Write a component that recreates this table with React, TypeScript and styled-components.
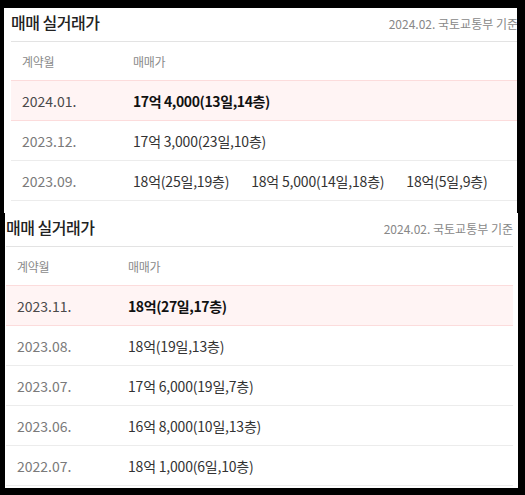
import React from "react";
import styled, { createGlobalStyle } from "styled-components";

const Global = createGlobalStyle`
  html, body { margin: 0; padding: 0; background: #000; }
  body { font-family: "Noto Sans CJK KR", "Noto Sans", sans-serif; }
  * { box-sizing: border-box; }
`;

const Page = styled.div`
  width: 525px;
  height: 495px;
  background: #000;
  padding-top: 8px;
  display: flex;
  flex-direction: column;
  overflow: hidden;
`;

const Shot = styled.div<{ $left: number; $padTop: number; $padLeft: number; $padBottom: number }>`
  margin-left: ${(p) => p.$left}px;
  width: 513px;
  background: #fff;
  overflow: hidden;
  padding: ${(p) => p.$padTop}px 0 ${(p) => p.$padBottom}px ${(p) => p.$padLeft}px;
`;

const Panel = styled.section`
  width: 507px;
`;

const TitleBar = styled.div`
  height: 34px;
  display: flex;
  align-items: center;
  justify-content: space-between;
  padding-bottom: 6px;
  border-bottom: 1px solid #e3e3e3;
`;

const Title = styled.h2`
  margin: 0;
  font-size: 16px;
  font-weight: 500;
  color: #222;
  letter-spacing: -0.5px;
`;

const Source = styled.span`
  font-size: 12px;
  color: #888;
  letter-spacing: 0;
  padding-top: 4px;
`;

const Row = styled.div<{ $kind: "head" | "hot" | "normal" }>`
  display: grid;
  grid-template-columns: 111px 1fr;
  align-items: center;
  height: ${(p) => (p.$kind === "head" ? 38 : p.$kind === "hot" ? 41 : 40)}px;
  padding-left: 11px;
  background: ${(p) => (p.$kind === "hot" ? "#fff4f4" : "#fff")};
  border-top: ${(p) => (p.$kind === "hot" ? "1px solid #fcdcdc" : "none")};
  border-bottom: ${(p) =>
    p.$kind === "head" ? "none" : p.$kind === "hot" ? "1px solid #fcdcdc" : "1px solid #ececec"};
`;

const HeadCell = styled.span`
  font-size: 12px;
  color: #8a8a8a;
  letter-spacing: -0.3px;
`;

const DateCell = styled.span<{ $hot: boolean }>`
  font-size: 14px;
  color: ${(p) => (p.$hot ? "#4a4a4a" : "#7a7a7a")};
  font-weight: 400;
`;

const Prices = styled.div`
  display: flex;
  gap: 22px;
`;

const Price = styled.span<{ $hot: boolean }>`
  font-size: 14px;
  color: ${(p) => (p.$hot ? "#111" : "#333")};
  font-weight: ${(p) => (p.$hot ? 700 : 400)};
  letter-spacing: ${(p) => (p.$hot ? "-0.4px" : "-0.2px")};
`;

type Deal = { month: string; prices: string[]; hot?: boolean };

const first: Deal[] = [
  { month: "2024.01.", prices: ["17억 4,000(13일,14층)"], hot: true },
  { month: "2023.12.", prices: ["17억 3,000(23일,10층)"] },
  { month: "2023.09.", prices: ["18억(25일,19층)", "18억 5,000(14일,18층)", "18억(5일,9층)"] },
];

const second: Deal[] = [
  { month: "2023.11.", prices: ["18억(27일,17층)"], hot: true },
  { month: "2023.08.", prices: ["18억(19일,13층)"] },
  { month: "2023.07.", prices: ["17억 6,000(19일,7층)"] },
  { month: "2023.06.", prices: ["16억 8,000(10일,13층)"] },
  { month: "2022.07.", prices: ["18억 1,000(6일,10층)"] },
];

function DealTable({ deals }: { deals: Deal[] }) {
  return (
    <Panel>
      <TitleBar>
        <Title>매매 실거래가</Title>
        <Source>2024.02. 국토교통부 기준</Source>
      </TitleBar>
      <Row $kind="head">
        <HeadCell>계약월</HeadCell>
        <HeadCell>매매가</HeadCell>
      </Row>
      {deals.map((d) => (
        <Row key={d.month} $kind={d.hot ? "hot" : "normal"}>
          <DateCell $hot={!!d.hot}>{d.month}</DateCell>
          <Prices>
            {d.prices.map((p) => (
              <Price key={p} $hot={!!d.hot}>
                {p}
              </Price>
            ))}
          </Prices>
        </Row>
      ))}
    </Panel>
  );
}

export default function App() {
  return (
    <>
      <Global />
      <Page>
        <Shot $left={4} $padTop={0} $padLeft={7} $padBottom={12}>
          <DealTable deals={first} />
        </Shot>
        <Shot $left={5} $padTop={0} $padLeft={1} $padBottom={2}>
          <DealTable deals={second} />
        </Shot>
      </Page>
    </>
  );
}
